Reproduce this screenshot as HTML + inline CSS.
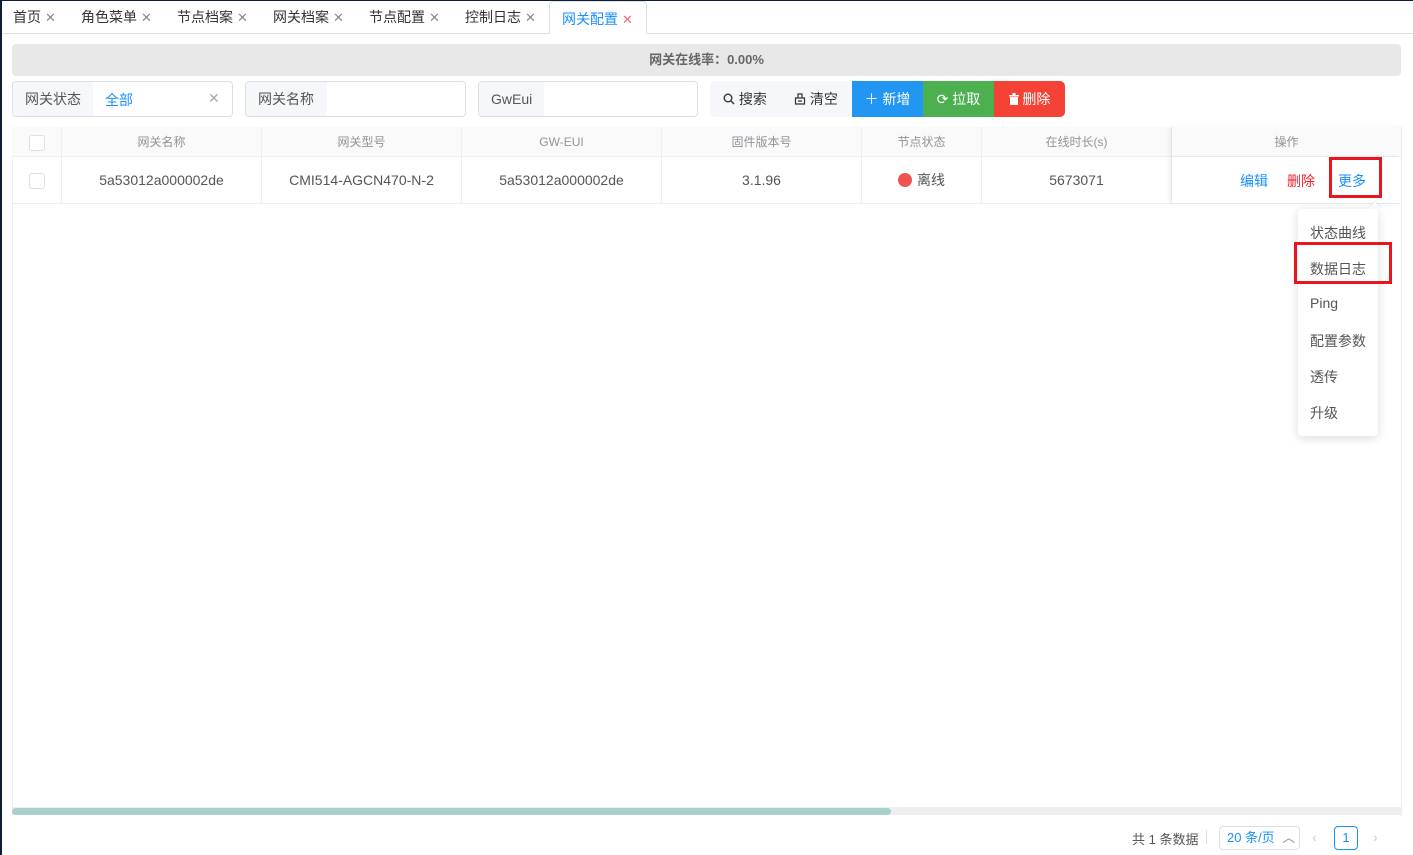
<!DOCTYPE html>
<html><head><meta charset="utf-8"><style>
*{box-sizing:border-box;margin:0;padding:0}
body{width:1413px;height:855px;position:relative;overflow:hidden;background:#fff;font-family:"Liberation Sans","Noto Sans CJK SC",sans-serif;font-size:14px;color:#333}
.a{position:absolute}
.tabs{left:0;top:0;width:1413px;height:34px;border-bottom:1px solid #dcdfe6}
.tab{position:absolute;top:7px;font-size:14px;color:#333}
.tab i{font-style:normal;color:#888;margin-left:4px;font-size:13px}
.act{left:549px;top:1px;width:98px;height:33px;border:1px solid #dcdfe6;border-bottom:1px solid #fff;border-radius:4px 4px 0 0;background:#fff;color:#1890ff;padding:7px 0 0 12px}
.bar{left:12px;top:44px;width:1389px;height:32px;background:#e8e8e8;border-radius:4px;text-align:center;line-height:32px;font-weight:bold;color:#666;font-size:13px}
.grp{top:81px;height:36px;border:1px solid #dcdfe6;border-radius:4px;overflow:hidden;background:#fff}
.lab{position:absolute;left:0;top:0;height:34px;background:#f5f7fa;line-height:34px;padding-left:12px;color:#555}
.btn{position:absolute;top:81px;height:36px;line-height:36px;color:#fff;text-align:center}
.th{position:absolute;top:127px;height:30px;line-height:30px;text-align:center;color:#909399;font-size:12px;border-right:1px solid #ebeef5}
.td{position:absolute;top:157px;height:46px;line-height:46px;text-align:center;color:#555;border-right:1px solid #ebeef5}
.cb{display:inline-block;width:16px;height:16px;border:1px solid #dcdfe6;border-radius:3px;vertical-align:middle;background:#fff}
.mi{position:absolute;left:12px;font-size:14px;color:#555}
</style></head><body>
<div class="a tabs"></div>
<div class="tab" style="left:13px">首页<i>✕</i></div>
<div class="tab" style="left:81px">角色菜单<i>✕</i></div>
<div class="tab" style="left:177px">节点档案<i>✕</i></div>
<div class="tab" style="left:273px">网关档案<i>✕</i></div>
<div class="tab" style="left:369px">节点配置<i>✕</i></div>
<div class="tab" style="left:465px">控制日志<i>✕</i></div>
<div class="a act">网关配置<span style="color:#f56c6c;margin-left:4px;font-size:13px">✕</span></div>

<div class="a bar">网关在线率：0.00%</div>

<div class="a grp" style="left:12px;width:221px"><div class="lab" style="width:80px">网关状态</div><span class="a" style="left:92px;top:8px;color:#1890ff">全部</span><span class="a" style="left:195px;top:8px;color:#aaa">✕</span></div>
<div class="a grp" style="left:245px;width:221px"><div class="lab" style="width:81px">网关名称</div></div>
<div class="a grp" style="left:478px;width:220px"><div class="lab" style="width:65px">GwEui</div></div>
<div class="a" style="left:710px;top:81px;width:355px;height:36px;background:#f5f7fa;border-radius:5px;overflow:hidden"></div>
<div class="btn" style="left:710px;width:70px;color:#333">
<svg width="12" height="12" viewBox="0 0 12 12" style="vertical-align:-1px"><circle cx="5" cy="5" r="3.8" fill="none" stroke="#333" stroke-width="1.4"/><path d="M8 8l3 3" stroke="#333" stroke-width="1.4"/></svg> 搜索</div>
<div class="btn" style="left:780px;width:72px;color:#333">
<svg width="12" height="12" viewBox="0 0 12 12" style="vertical-align:-1px"><path d="M4 1h4v4H4zM1.5 5h9v6h-9zM4 8h4" fill="none" stroke="#333" stroke-width="1.2"/></svg> 清空</div>
<div class="btn" style="left:852px;width:71px;background:#2196f3">＋ 新增</div>
<div class="btn" style="left:923px;width:71px;background:#4caf50">⟳ 拉取</div>
<div class="btn" style="left:994px;width:71px;background:#f44336;border-radius:0 5px 5px 0">
<svg width="10" height="12" viewBox="0 0 10 12" style="vertical-align:-1px"><path d="M0 2h10v1.5H0zM3.5 0h3v2h-3zM1 4h8v8H1z" fill="#fff"/></svg> 删除</div>

<div class="a" style="left:12px;top:127px;width:1390px;height:689px;border:1px solid #ebeef5;border-bottom:none"></div>
<div class="a" style="left:12px;top:127px;width:1389px;height:30px;background:#fafafa;border-bottom:1px solid #ebeef5"></div>
<div class="a" style="left:12px;top:203px;width:1389px;border-top:1px solid #ebeef5"></div>
<div class="th" style="left:12px;width:50px"><span class="cb"></span></div>
<div class="th" style="left:62px;width:200px">网关名称</div>
<div class="th" style="left:262px;width:200px">网关型号</div>
<div class="th" style="left:462px;width:200px">GW-EUI</div>
<div class="th" style="left:662px;width:200px">固件版本号</div>
<div class="th" style="left:862px;width:120px">节点状态</div>
<div class="th" style="left:982px;width:190px">在线时长(s)</div>
<div class="th" style="left:1172px;width:229px;border-right:none;box-shadow:-3px 0 5px rgba(0,0,0,.06)">操作</div>
<div class="td" style="left:12px;width:50px"><span class="cb"></span></div>
<div class="td" style="left:62px;width:200px">5a53012a000002de</div>
<div class="td" style="left:262px;width:200px">CMI514-AGCN470-N-2</div>
<div class="td" style="left:462px;width:200px">5a53012a000002de</div>
<div class="td" style="left:662px;width:200px">3.1.96</div>
<div class="td" style="left:862px;width:120px"><span style="display:inline-block;width:14px;height:14px;border-radius:50%;background:#ef5350;vertical-align:-2px;margin-right:5px"></span>离线</div>
<div class="td" style="left:982px;width:190px">5673071</div>
<div class="td" style="left:1172px;width:229px;border-right:none;box-shadow:-3px 0 5px rgba(0,0,0,.06);background:#fff"></div>
<span class="a" style="left:1240px;top:171px;color:#1890ff">编辑</span>
<span class="a" style="left:1287px;top:171px;color:#f5222d">删除</span>
<span class="a" style="left:1338px;top:171px;color:#1890ff">更多</span>
<div class="a" style="left:1329px;top:157px;width:53px;height:41px;border:3px solid #e8141e"></div>

<div class="a" style="left:1370px;top:204px;width:10px;height:10px;background:#fff;transform:rotate(45deg);box-shadow:-1px -1px 2px rgba(0,0,0,.06)"></div>
<div class="a" style="left:1298px;top:209px;width:80px;height:227px;background:#fff;border-radius:4px;box-shadow:0 2px 10px rgba(0,0,0,.15)">
<div class="mi" style="top:14px">状态曲线</div>
<div class="mi" style="top:50px">数据日志</div>
<div class="mi" style="top:86px">Ping</div>
<div class="mi" style="top:122px">配置参数</div>
<div class="mi" style="top:158px">透传</div>
<div class="mi" style="top:194px">升级</div>
</div>
<div class="a" style="left:1294px;top:242px;width:98px;height:42px;border:3px solid #e8141e"></div>

<div class="a" style="left:12px;top:807px;width:1389px;height:8px;background:#eeeef0"></div>
<div class="a" style="left:12px;top:808px;width:879px;height:7px;background:#a8d0cd;border-radius:4px"></div>

<span class="a" style="left:1132px;top:829px;font-size:13px;color:#555">共 1 条数据</span>
<div class="a" style="left:1206px;top:830px;height:14px;border-left:1px solid #ddd"></div>
<div class="a" style="left:1219px;top:826px;width:81px;height:24px;border:1px solid #dcdfe6;border-radius:4px;color:#1890ff;font-size:13px;line-height:22px;padding-left:7px;white-space:nowrap">20 条/页 <span style="color:#888;margin-left:4px">︿</span></div>
<span class="a" style="left:1312px;top:829px;color:#ccc">‹</span>
<div class="a" style="left:1334px;top:826px;width:24px;height:24px;border:1px solid #1890ff;border-radius:4px;color:#1890ff;text-align:center;line-height:22px;font-size:13px">1</div>
<span class="a" style="left:1373px;top:829px;color:#ccc">›</span>

<div class="a" style="left:0;top:0;width:2px;height:855px;background:#0f1f33"></div>
<div class="a" style="left:0;top:0;width:1413px;height:1px;background:#0f1f33"></div>
</body></html>
